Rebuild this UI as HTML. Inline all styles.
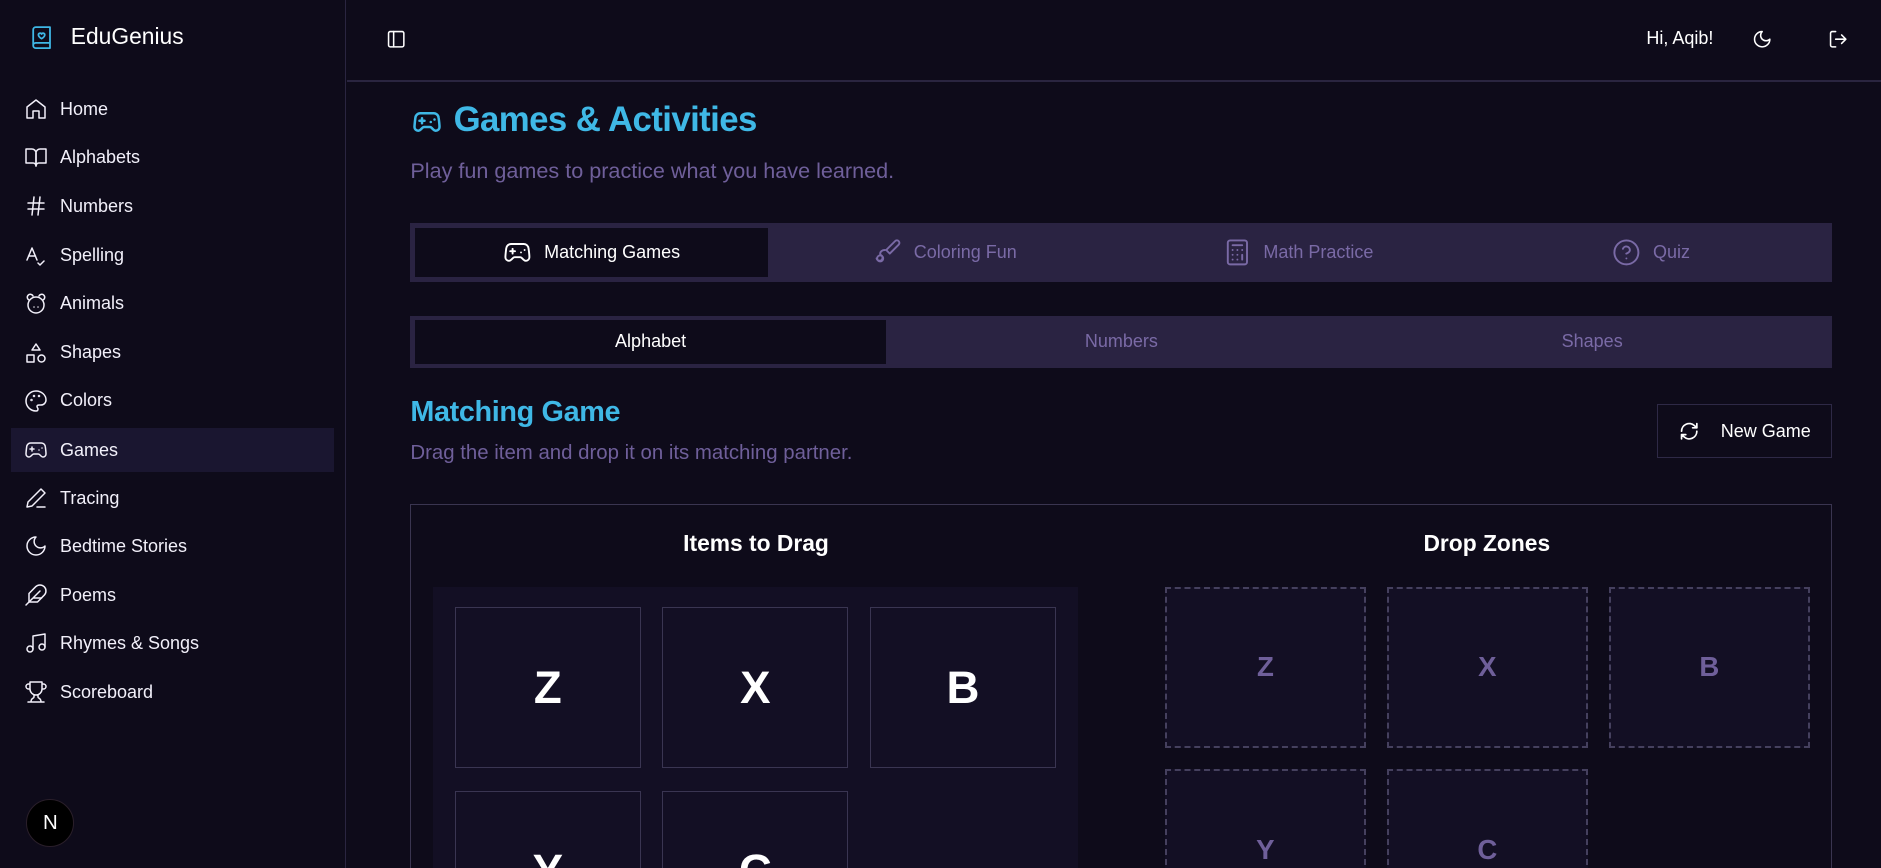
<!DOCTYPE html>
<html><head><meta charset="utf-8"><style>
*{box-sizing:border-box;margin:0;padding:0}
html,body{width:1881px;height:868px;overflow:hidden;background:#0e0b1a}
#r{zoom:1.2;width:1568px;height:723px;position:relative;font-family:"Liberation Sans",sans-serif;color:#fff;overflow:hidden}
.a{position:absolute}
svg{fill:none;stroke:currentColor;stroke-width:2;stroke-linecap:round;stroke-linejoin:round}
.side{left:0;top:0;width:288px;height:723px;border-right:1px solid #2a2540}
.nav{left:20px;height:20px;display:flex;align-items:center;font-size:15px;color:#f2f0fa}
.nav svg{width:20px;height:20px;margin-right:10px;stroke-width:1.5}
.tabs{left:342px;width:1185px;background:#2a2342;display:flex;padding:4px 4px}
.tabs div{flex:1;display:flex;align-items:center;justify-content:center;color:#7a6aa6;font-size:15px}
.tabs div.on{background:#0e0b1a;color:#fff}
.tabs svg{width:24px;height:24px;margin-right:10px;stroke-width:1.6}
.card{width:155px;height:134px;background:#130f24;border:1px solid #3a3552;display:flex;align-items:center;justify-content:center;font-size:38px;font-weight:bold}
.dz{width:167px;height:134px;background:#130f24;border:2px dashed #45405e;display:flex;align-items:center;justify-content:center;font-size:23px;font-weight:bold;color:#6f5f9a}
</style></head><body><div id="r">
<div class="a side">
<svg class="a" style="left:24px;top:21px;width:21px;height:21px;color:#3fb8e6;stroke-width:1.7" viewBox="0 0 24 24"><path d="M4 19.5v-15A2.5 2.5 0 0 1 6.5 2H20v20H6.5a2.5 2.5 0 0 1 0-5H20"/><path d="M12 13s-3-1.8-3-3.6A1.6 1.6 0 0 1 12 8.6a1.6 1.6 0 0 1 3 .8C15 11.2 12 13 12 13z"/></svg>
<div class="a" style="left:59px;top:19px;font-size:19px">EduGenius</div>
<div class="a" style="left:9px;top:357px;width:269px;height:36px;background:#1a1630"></div>
<div class="a nav" style="top:81px"><svg viewBox="0 0 24 24"><path d="M3 10l9-7 9 7v11H15v-7H9v7H3z"/></svg>Home</div>
<div class="a nav" style="top:121px"><svg viewBox="0 0 24 24"><path d="M2 4h6a4 4 0 0 1 4 4v13a3 3 0 0 0-3-3H2z"/><path d="M22 4h-6a4 4 0 0 0-4 4v13a3 3 0 0 1 3-3h7z"/></svg>Alphabets</div>
<div class="a nav" style="top:162px"><svg viewBox="0 0 24 24"><path d="M4 9h16M4 15h16M10 3L8 21M16 3l-2 18"/></svg>Numbers</div>
<div class="a nav" style="top:203px"><svg viewBox="0 0 24 24"><path d="M3 16l5-12 5 12M4.5 12h7M14 19l2 2 4-4"/></svg>Spelling</div>
<div class="a nav" style="top:243px"><svg viewBox="0 0 24 24"><circle cx="12" cy="13" r="8"/><path d="M10 15h.01M14 15h.01M5 8a3 3 0 1 1 4-4M19 8a3 3 0 1 0-4-4"/></svg>Animals</div>
<div class="a nav" style="top:284px"><svg viewBox="0 0 24 24"><path d="M12 3l4 6H8z"/><rect x="3" y="14" width="7" height="7"/><circle cx="17.5" cy="17.5" r="3.5"/></svg>Shapes</div>
<div class="a nav" style="top:324px"><svg viewBox="0 0 24 24"><path d="M12 2a10 10 0 0 0 0 20c1.5 0 2-1 2-2s-1-1.5-1-2.5 1-1.5 2-1.5h2a5 5 0 0 0 5-5C22 6 17.5 2 12 2z"/><circle cx="7.5" cy="11" r=".5"/><circle cx="10" cy="7" r=".5"/><circle cx="15" cy="7" r=".5"/></svg>Colors</div>
<div class="a nav" style="top:365px"><svg viewBox="0 0 24 24"><path d="M6 11h4M8 9v4M15 12h.01M18 10h.01"/><path d="M17.32 5H6.68a4 4 0 0 0-3.98 3.59C2.6 9.4 2 14.5 2 16a3 3 0 0 0 3 3c1 0 1.5-.5 2-1l1.4-1.4A2 2 0 0 1 9.8 16h4.3a2 2 0 0 1 1.5.6L17 18c.5.5 1 1 2 1a3 3 0 0 0 3-3c0-1.5-.6-6.6-.7-7.3A4 4 0 0 0 17.32 5z"/></svg>Games</div>
<div class="a nav" style="top:405px"><svg viewBox="0 0 24 24"><path d="M13 21h8M17 3l4 4L8 20l-5 1 1-5z"/></svg>Tracing</div>
<div class="a nav" style="top:445px"><svg viewBox="0 0 24 24"><path d="M12 3a6 6 0 0 0 9 9 9 9 0 1 1-9-9z"/></svg>Bedtime Stories</div>
<div class="a nav" style="top:486px"><svg viewBox="0 0 24 24"><path d="M20.2 12.2a6 6 0 0 0-8.5-8.5L5 10.5V19h8.5z"/><path d="M16 8L2 22M17.5 15H9"/></svg>Poems</div>
<div class="a nav" style="top:526px"><svg viewBox="0 0 24 24"><path d="M9 18V5l12-2v13"/><circle cx="6" cy="18" r="3"/><circle cx="18" cy="16" r="3"/></svg>Rhymes &amp; Songs</div>
<div class="a nav" style="top:567px"><svg viewBox="0 0 24 24"><path d="M6 9H4.5a2.5 2.5 0 0 1 0-5H6M18 9h1.5a2.5 2.5 0 0 0 0-5H18M4 22h16M10 14.7V17c0 .6-.5 1-1 1.2C7.8 18.8 7 20.2 7 22M14 14.7V17c0 .6.5 1 1 1.2 1.2.6 2 2 2 3.8M18 2H6v7a6 6 0 0 0 12 0z"/></svg>Scoreboard</div>
<div class="a" style="left:22px;top:666px;width:40px;height:40px;border-radius:50%;background:#000;border:1px solid #2a1f2a;display:flex;align-items:center;justify-content:center;font-size:17px">N</div>
</div>
<div class="a" style="left:289px;top:67px;width:1279px;height:1px;background:#2a2540"></div>
<svg class="a" style="left:322px;top:24px;width:17px;height:17px;stroke-width:1.8" viewBox="0 0 24 24"><rect x="3" y="3" width="18" height="18" rx="2"/><path d="M9 3v18"/></svg>
<div class="a" style="left:1372px;top:23px;font-size:15px">Hi, Aqib!</div>
<svg class="a" style="left:1460px;top:24px;width:17px;height:17px;stroke-width:1.8" viewBox="0 0 24 24"><path d="M12 3a6 6 0 0 0 9 9 9 9 0 1 1-9-9z"/></svg>
<svg class="a" style="left:1523px;top:24px;width:17px;height:17px;stroke-width:1.8" viewBox="0 0 24 24"><path d="M9 21H5a2 2 0 0 1-2-2V5a2 2 0 0 1 2-2h4M16 17l5-5-5-5M21 12H9"/></svg>
<svg class="a" style="left:343px;top:89px;width:25px;height:25px;color:#3fb8e6" viewBox="0 0 24 24"><path d="M6 11h4M8 9v4M15 12h.01M18 10h.01"/><path d="M17.32 5H6.68a4 4 0 0 0-3.98 3.59C2.6 9.4 2 14.5 2 16a3 3 0 0 0 3 3c1 0 1.5-.5 2-1l1.4-1.4A2 2 0 0 1 9.8 16h4.3a2 2 0 0 1 1.5.6L17 18c.5.5 1 1 2 1a3 3 0 0 0 3-3c0-1.5-.6-6.6-.7-7.3A4 4 0 0 0 17.32 5z"/></svg>
<div class="a" style="left:378px;top:83px;font-size:29px;font-weight:bold;color:#3fb8e6;letter-spacing:-.5px">Games &amp; Activities</div>
<div class="a" style="left:342px;top:132px;font-size:18px;color:#6f5f9a">Play fun games to practice what you have learned.</div>
<div class="a tabs" style="top:186px;height:49px">
<div class="on"><svg viewBox="0 0 24 24"><path d="M6 11h4M8 9v4M15 12h.01M18 10h.01"/><path d="M17.32 5H6.68a4 4 0 0 0-3.98 3.59C2.6 9.4 2 14.5 2 16a3 3 0 0 0 3 3c1 0 1.5-.5 2-1l1.4-1.4A2 2 0 0 1 9.8 16h4.3a2 2 0 0 1 1.5.6L17 18c.5.5 1 1 2 1a3 3 0 0 0 3-3c0-1.5-.6-6.6-.7-7.3A4 4 0 0 0 17.32 5z"/></svg>Matching Games</div>
<div><svg viewBox="0 0 24 24"><path d="M18.4 2.6a2 2 0 0 1 3 3L14 13l-3-3z"/><path d="M10 10c-2 0-4 1-4 3v1a2.5 2.5 0 1 1-3 3"/><circle cx="6" cy="17" r="2.5"/></svg>Coloring Fun</div>
<div><svg viewBox="0 0 24 24"><rect x="4" y="2" width="16" height="20" rx="2"/><path d="M8 6h8M16 14v4M8 10h.01M12 10h.01M16 10h.01M8 14h.01M12 14h.01M8 18h.01M12 18h.01"/></svg>Math Practice</div>
<div><svg viewBox="0 0 24 24"><circle cx="12" cy="12" r="10"/><path d="M9.1 9a3 3 0 0 1 5.8 1c0 2-3 3-3 3M12 17h.01"/></svg>Quiz</div>
</div>
<div class="a tabs" style="top:263px;height:44px">
<div class="on">Alphabet</div><div>Numbers</div><div>Shapes</div>
</div>
<div class="a" style="left:342px;top:330px;font-size:24px;font-weight:bold;color:#3fb8e6;letter-spacing:-.3px">Matching Game</div>
<div class="a" style="left:342px;top:368px;font-size:17px;color:#6f5f9a">Drag the item and drop it on its matching partner.</div>
<div class="a" style="left:1381px;top:337px;width:146px;height:45px;border:1px solid #2e2946;display:flex;align-items:center;justify-content:center;font-size:15px"><svg style="width:17px;height:17px;margin-right:18px" viewBox="0 0 24 24"><path d="M3 12a9 9 0 0 1 15-6.7L21 8M21 3v5h-5M21 12a9 9 0 0 1-15 6.7L3 16M8 16H3v5"/></svg>New Game</div>
<div class="a" style="left:342px;top:420px;width:1185px;height:310px;border:1px solid #3a3550"></div>
<div class="a" style="left:530px;top:442px;width:200px;text-align:center;font-size:19px;font-weight:bold">Items to Drag</div>
<div class="a" style="left:1139px;top:442px;width:200px;text-align:center;font-size:19px;font-weight:bold">Drop Zones</div>
<div class="a" style="left:361px;top:489px;width:537px;height:240px;background:#130f24"></div>
<div class="a card" style="left:379px;top:506px">Z</div>
<div class="a card" style="left:552px;top:506px">X</div>
<div class="a card" style="left:725px;top:506px">B</div>
<div class="a card" style="left:379px;top:659px;height:70px;align-items:flex-start;padding-top:44px">Y</div>
<div class="a card" style="left:552px;top:659px;height:70px;align-items:flex-start;padding-top:44px">C</div>
<div class="a dz" style="left:971px;top:489px">Z</div>
<div class="a dz" style="left:1156px;top:489px">X</div>
<div class="a dz" style="left:1341px;top:489px">B</div>
<div class="a dz" style="left:971px;top:641px;height:88px;align-items:flex-start;padding-top:52px">Y</div>
<div class="a dz" style="left:1156px;top:641px;height:88px;align-items:flex-start;padding-top:52px">C</div>
</div></body></html>
